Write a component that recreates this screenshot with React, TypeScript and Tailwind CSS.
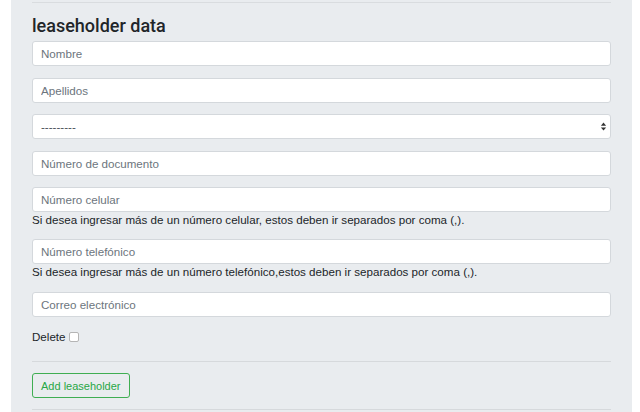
import React from "react";

const inputCls =
  "block w-full h-[25px] rounded-[3px] border border-[#d4d8dc] bg-white px-[8px] text-[11.6px] text-[#495057] placeholder:text-[#6c757d] outline-none";

function Field({ placeholder }: { placeholder: string }) {
  return <input className={inputCls} placeholder={placeholder} />;
}

export default function App() {
  return (
    <div
      className="flex min-h-[412px] w-[640px] overflow-hidden bg-white text-[#212529]"
      style={{ fontFamily: '"Liberation Sans", Arial, sans-serif' }}
    >
      <div className="ml-[11px] w-[621px] bg-[#e9ecef] px-[21px]">
        <div className="mt-[2px] border-t border-[#d9dcdf]" />
        <h2
          className="mt-[10px] mb-[2px] text-[18px] font-medium leading-[26px] text-[#212529]"
          style={{ fontFamily: "Roboto, Arial, sans-serif" }}
        >
          leaseholder data
        </h2>
        <div className="flex flex-col">
          <Field placeholder="Nombre" />
          <div className="h-[11.5px]" />
          <Field placeholder="Apellidos" />
          <div className="h-[11.5px]" />
          <div className="relative">
            <select className={inputCls + " appearance-none text-[#212529]"}>
              <option>---------</option>
            </select>
            <svg
              className="pointer-events-none absolute right-[4px] top-[8px]"
              width="7"
              height="9"
              viewBox="0 0 8 10"
            >
              <path d="M4 0.5 L7 4 L1 4 Z" fill="#333" />
              <path d="M4 9.5 L7 6 L1 6 Z" fill="#333" />
            </svg>
          </div>
          <div className="h-[11.5px]" />
          <Field placeholder="Número de documento" />
          <div className="h-[11.5px]" />
          <Field placeholder="Número celular" />
          <p className="text-[11.6px] leading-[16px]">
            Si desea ingresar más de un número celular, estos deben ir separados por coma (,).
          </p>
          <div className="h-[10.5px]" />
          <Field placeholder="Número telefónico" />
          <p className="text-[11.6px] leading-[16px]">
            Si desea ingresar más de un número telefónico,estos deben ir separados por coma (,).
          </p>
          <div className="h-[12px]" />
          <Field placeholder="Correo electrónico" />
          <div className="mt-[11px] flex h-[18px] items-center text-[11.6px]">
            <span>Delete</span>
            <span className="ml-[3px] inline-block h-[10px] w-[10px] rounded-[2px] border border-[#b5b5b5] bg-white" />
          </div>
          <div className="mt-[15px] border-t border-[#d6d9dc]" />
          <div className="mt-[11px]">
            <button className="h-[25px] rounded-[3px] border border-[#3fae52] px-[8px] text-[11px] text-[#28a745]">
              Add leaseholder
            </button>
          </div>
          <div className="mt-[11px] border-t border-[#d6d9dc]" />
        </div>
      </div>
    </div>
  );
}
